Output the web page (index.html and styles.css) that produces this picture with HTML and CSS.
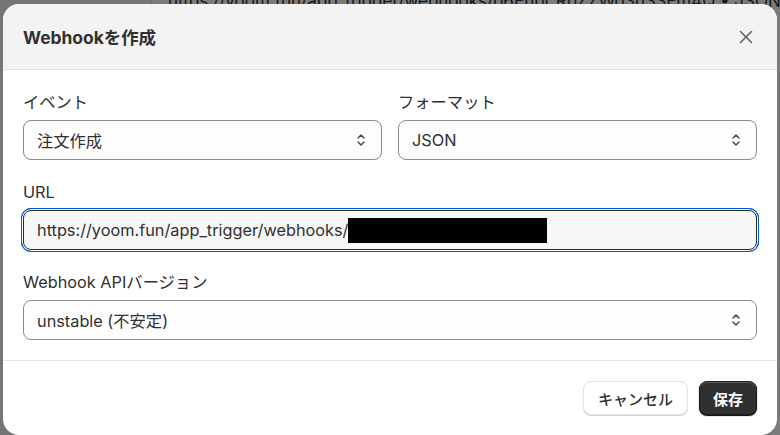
FILE: index.html
```html
<!DOCTYPE html>
<html lang="ja">
<head>
<meta charset="UTF-8" />
<meta name="viewport" content="width=device-width, initial-scale=1" />
<title>Webhookを作成</title>
<link rel="stylesheet" href="styles.css">
</head>
<body>

<!-- ページ本体（モーダルの後ろで暗くなっている部分） -->
<div class="page">
  <aside class="page-side"></aside>
  <div class="page-main">
    <p class="page-row">https://yoom.fun/app_trigger/webhooks/o6Enpr RbZZWo3u33Em4Q • JSON</p>
  </div>
</div>
<div class="backdrop"></div>

<div class="modal" role="dialog" aria-labelledby="modalTitle">
  <header class="modal-head">
    <h2 id="modalTitle">Webhookを作成</h2>
    <button class="close-btn" aria-label="閉じる">
      <svg width="14" height="14" viewBox="0 0 14 14"><path d="M1.5 1.5l11 11M12.5 1.5l-11 11" stroke="#616161" stroke-width="1.6" stroke-linecap="round"/></svg>
    </button>
  </header>

  <div class="modal-body">
    <div class="row two">
      <div class="field">
        <label>イベント</label>
        <div class="select">
          <span>注文作成</span>
          <svg class="chev" width="10" height="16" viewBox="0 0 10 16"><path d="M2 6l3-3 3 3M2 10l3 3 3-3" fill="none" stroke="#4a4a4a" stroke-width="1.5" stroke-linecap="round" stroke-linejoin="round"/></svg>
        </div>
      </div>
      <div class="field">
        <label>フォーマット</label>
        <div class="select">
          <span>JSON</span>
          <svg class="chev" width="10" height="16" viewBox="0 0 10 16"><path d="M2 6l3-3 3 3M2 10l3 3 3-3" fill="none" stroke="#4a4a4a" stroke-width="1.5" stroke-linecap="round" stroke-linejoin="round"/></svg>
        </div>
      </div>
    </div>

    <div class="field">
      <label>URL</label>
      <div class="input focused">
        <span>https://yoom.fun/app_trigger/webhooks/</span><span class="masked"></span>
      </div>
    </div>

    <div class="field">
      <label>Webhook APIバージョン</label>
      <div class="select">
        <span>unstable (不安定)</span>
        <svg class="chev" width="10" height="16" viewBox="0 0 10 16"><path d="M2 6l3-3 3 3M2 10l3 3 3-3" fill="none" stroke="#4a4a4a" stroke-width="1.5" stroke-linecap="round" stroke-linejoin="round"/></svg>
      </div>
    </div>
  </div>

  <footer class="modal-foot">
    <button class="btn">キャンセル</button>
    <button class="btn primary">保存</button>
  </footer>
</div>

</body>
</html>
```

FILE: styles.css
```css
* { box-sizing: border-box; }
body {
  margin: 0; width: 780px; height: 435px; overflow: hidden; position: relative;
  font-family: Inter, "Noto Sans CJK JP", sans-serif; color: #303030; background: #f1f1f1;
}

/* 後ろのページ */
.page { display: flex; height: 100%; }
.page-side { width: 152px; background: #ebebeb; border-right: 1px solid #d4d4d4; }
.page-main { flex: 1; background: #f7f7f7; overflow: hidden; }
.page-row { margin: -9px 0 0 16px; font-size: 17px; color: #303030; white-space: nowrap; }
.backdrop { position: absolute; inset: 0; background: rgba(0, 0, 0, 0.5); }

/* モーダル */
.modal {
  position: absolute; left: 3px; top: 4px; width: 774px; height: 431px;
  background: #fff; border-radius: 16px; overflow: hidden;
  display: flex; flex-direction: column;
}
.modal-head {
  height: 66px; background: #f3f3f3; border-bottom: 1px solid #e3e3e3;
  display: flex; align-items: center; justify-content: space-between;
  padding: 0 24px 0 20px;
}
.modal-head h2 { margin: 0; font-size: 17.4px; font-weight: 700; color: #303030; }
.close-btn { background: none; border: none; padding: 0; width: 14px; height: 14px; display: flex; cursor: pointer; }

.modal-body {
  padding: 22px 20px 20px; border-bottom: 1px solid #e3e3e3;
  display: flex; flex-direction: column; gap: 22px;
}
.row.two { display: grid; grid-template-columns: 1fr 1fr; gap: 16px; }
.field label { display: block; font-size: 16.3px; line-height: 20px; margin-bottom: 8px; color: #303030; }

.select, .input {
  height: 40px; border-radius: 8px; padding: 0 13px;
  display: flex; align-items: center; font-size: 16.3px; color: #303030;
}
.select { border: 1px solid #8a8a8a; background: #fdfdfd; justify-content: space-between; padding-right: 15px; }
.input { border: 1px solid #2a2a2a; background: #f7f7f7; }
.input.focused { box-shadow: 0 0 0 1px #fff, 0 0 0 2px #005bd3; outline: 1px solid #005bd3; outline-offset: 1px; }
.masked { display: inline-block; width: 199px; height: 25px; background: #000; }

.modal-foot {
  flex: 1; display: flex; justify-content: flex-end; align-items: center;
  gap: 11px; padding: 0 20px;
}
.btn {
  height: 34px; padding: 0 14px; border-radius: 8px; font-family: inherit; font-size: 15px;
  font-weight: 500; color: #303030; background: #fff; border: 1px solid #e3e3e3;
  box-shadow: 0 1px 0 #d4d4d4; cursor: pointer;
}
.btn.primary {
  padding: 0 13px;
  background: #303030; color: #fff; font-weight: 700; border-color: #1a1a1a;
  box-shadow: inset 0 1px 0 #5a5a5a, 0 1px 1px #000;
}
```
